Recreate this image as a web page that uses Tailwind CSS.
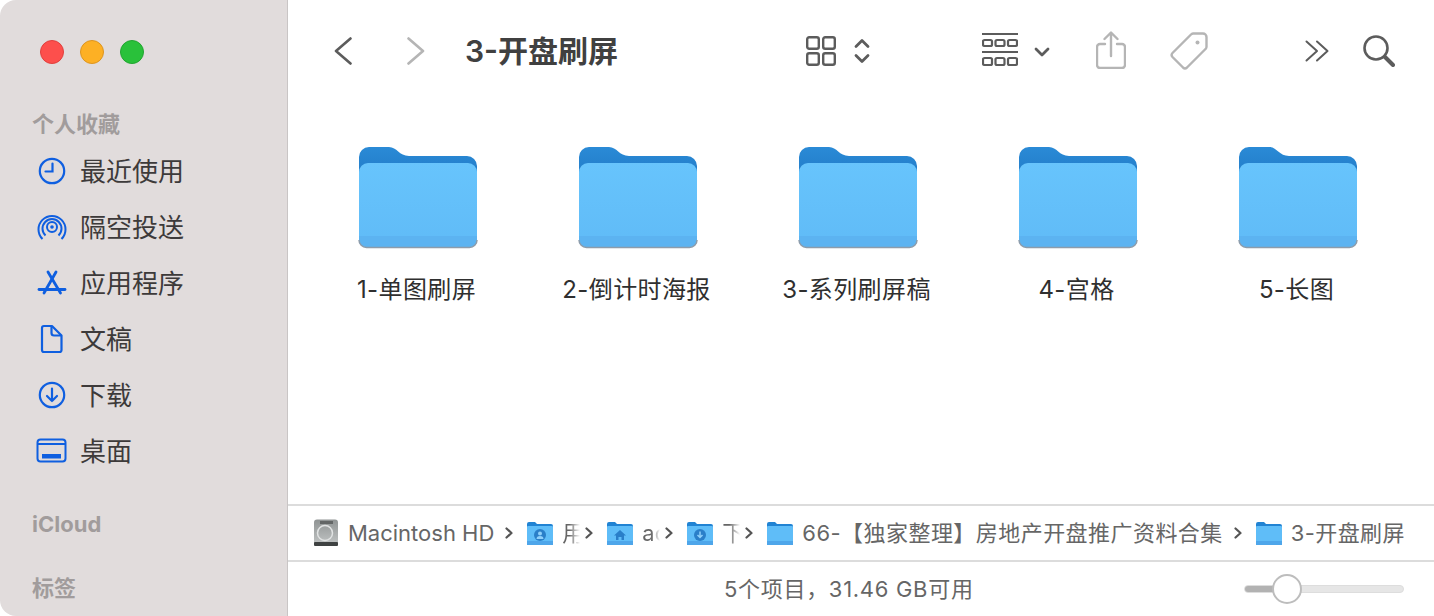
<!DOCTYPE html>
<html lang="zh">
<head>
    <meta charset="UTF-8">
    <title>3-开盘刷屏</title>
    <script src="https://cdn.jsdelivr.net/npm/@tailwindcss/browser@4"></script>
</head>
<body class="bg-white overflow-hidden">
    <!-- Shared icons -->
    <svg class="absolute w-0 h-0">
        <defs>
            <linearGradient id="folderFront" x1="0" y1="0" x2="0" y2="1">
                <stop offset="0" stop-color="#67c4fc"/>
                <stop offset="1" stop-color="#60bbf7"/>
            </linearGradient>
            <linearGradient id="folderBack" x1="0" y1="0" x2="0" y2="1">
                <stop offset="0" stop-color="#2a8ad6"/>
                <stop offset="1" stop-color="#1f78c4"/>
            </linearGradient>
            <linearGradient id="diskBody" x1="0" y1="0" x2="0" y2="1">
                <stop offset="0" stop-color="#8f9393"/>
                <stop offset="1" stop-color="#c3c6c6"/>
            </linearGradient>
        </defs>
        <symbol id="folder" viewBox="0 0 120 102">
            <path d="M1 10 a10 10 0 0 1 10-10 h20 c8 0 10 9 20 9 h58 a10 10 0 0 1 10 10 v20 H1z" fill="url(#folderBack)"/>
            <path d="M1 25 a9 9 0 0 1 9-9 h100 a9 9 0 0 1 9 9 v68 a7 7 0 0 1-7 7 H8 a7 7 0 0 1-7-7z" fill="url(#folderFront)"/>
            <path d="M1 89 h118 v4 a7 7 0 0 1-7 7 H8 a7 7 0 0 1-7-7z" fill="#5cb3f1"/>
            <path d="M1 93 a7.500 7.500 0 0 0 7.500 7.500 h103 a7.500 7.500 0 0 0 7.500-7.500" fill="none" stroke="#8d9cab" stroke-width="1.500"/>
        </symbol>
        <symbol id="mini" viewBox="0 0 26 26">
            <path d="M0 4 a2 2 0 0 1 2-2 h6 l2 2 h14 a2 2 0 0 1 2 2 v6 H0z" fill="#2183d3"/>
            <path d="M0 7 a1 1 0 0 1 1-1 h24 a1 1 0 0 1 1 1 v17 a1 1 0 0 1-1 1 H1 a1 1 0 0 1-1-1z" fill="#5fbdf8"/>
            <rect y="21" width="26" height="4" fill="#4ea6ea"/>
        </symbol>
    </svg>

    <div class="flex h-[616px] w-[1434px] font-['Inter','Noto_Sans_CJK_SC',sans-serif]">
        <!-- Sidebar -->
        <aside class="flex flex-col w-[288px] shrink-0 bg-[#e1dcdc] rounded-l-[16px] border-r border-[#c9c5c5] pl-[32px] text-[#3d3a3a]">
            <div class="flex gap-[16px] pl-[8px] pt-[40px]">
                <span class="size-[24px] rounded-full bg-[#fd4f4c] border border-[#e0403d]"></span>
                <span class="size-[24px] rounded-full bg-[#fdb024] border border-[#dd9520]"></span>
                <span class="size-[24px] rounded-full bg-[#29c13a] border border-[#22a531]"></span>
            </div>
            <div class="mt-[45px] text-[22px] leading-[30px] font-bold text-[#a19c9c]">个人收藏</div>
            <nav class="mt-[4px] pl-[4px] flex flex-col text-[26px]">
                <div class="flex items-center h-[56px]">
                    <svg class="w-[32px] h-[32px] mr-[12px] text-[#0f5fe0]" viewBox="0 0 32 32" fill="none" stroke="currentColor" stroke-width="2.200">
                        <circle cx="16" cy="16" r="12.200"/>
                        <path d="M16.500 8.500 v8 h-7" stroke-linecap="round"/>
                    </svg>
                    <span>最近使用</span>
                </div>
                <div class="flex items-center h-[56px]">
                    <svg class="w-[32px] h-[32px] mr-[12px] text-[#0f5fe0]" viewBox="0 0 32 32" fill="none" stroke="currentColor" stroke-width="2">
                        <path d="M6.500 28 a13.500 13.500 0 1 1 19 0"/>
                        <path d="M9.500 24.500 a9.500 9.500 0 1 1 13 0"/>
                        <circle cx="16" cy="16" r="5"/>
                        <circle cx="16" cy="16" r="1.800" fill="currentColor" stroke="none"/>
                    </svg>
                    <span>隔空投送</span>
                </div>
                <div class="flex items-center h-[56px]">
                    <svg class="w-[32px] h-[32px] mr-[12px] text-[#0f5fe0]" viewBox="0 0 32 32" fill="none" stroke="currentColor" stroke-width="2.800" stroke-linecap="round">
                        <path d="M12 5 L24.500 26"/>
                        <path d="M20 5 L8 26"/>
                        <path d="M3 22.500 H29"/>
                    </svg>
                    <span>应用程序</span>
                </div>
                <div class="flex items-center h-[56px]">
                    <svg class="w-[32px] h-[32px] mr-[12px] text-[#0f5fe0]" viewBox="0 0 32 32" fill="none" stroke="currentColor" stroke-width="2.200" stroke-linejoin="round">
                        <path d="M6 5 a2 2 0 0 1 2-2 h8 l9.500 9.500 v14.500 a2 2 0 0 1-2 2 H8 a2 2 0 0 1-2-2z"/>
                        <path d="M15.500 3 v7 a2.500 2.500 0 0 0 2.500 2.500 h7.500"/>
                    </svg>
                    <span>文稿</span>
                </div>
                <div class="flex items-center h-[56px]">
                    <svg class="w-[32px] h-[32px] mr-[12px] text-[#0f5fe0]" viewBox="0 0 32 32" fill="none" stroke="currentColor" stroke-width="2.200" stroke-linecap="round" stroke-linejoin="round">
                        <circle cx="16" cy="16" r="12.200"/>
                        <path d="M16 9.500 v12.500 M11 17 l5 5 l5-5"/>
                    </svg>
                    <span>下载</span>
                </div>
                <div class="flex items-center h-[56px]">
                    <svg class="w-[32px] h-[32px] mr-[12px] text-[#0f5fe0] overflow-visible" viewBox="0 0 32 32" fill="none" stroke="currentColor" stroke-width="2">
                        <rect x="1.500" y="4.500" width="28" height="22" rx="3"/>
                        <path d="M1.500 9 h28"/>
                        <rect x="6" y="19" width="19" height="4.500" fill="currentColor" stroke="none"/>
                    </svg>
                    <span>桌面</span>
                </div>
            </nav>
            <div class="mt-[30px] text-[22px] leading-[30px] font-bold text-[#a19c9c]">iCloud</div>
            <div class="mt-[34px] text-[22px] leading-[30px] font-bold text-[#a19c9c]">标签</div>
        </aside>

        <!-- Main -->
        <main class="flex flex-col flex-1 min-w-0">
            <header class="flex items-center h-[102px] shrink-0 pl-[46px]">
                <svg class="w-[18px] h-[28px]" viewBox="0 0 18 28" fill="none" stroke="#5c5c5c" stroke-width="2.600" stroke-linecap="round" stroke-linejoin="round"><path d="M16.500 1.500 L2 14 L16.500 26.500"/></svg>
                <svg class="w-[18px] h-[28px] ml-[55px]" viewBox="0 0 18 28" fill="none" stroke="#b5b5b5" stroke-width="2.600" stroke-linecap="round" stroke-linejoin="round"><path d="M1.500 1.500 L16 14 L1.500 26.500"/></svg>
                <h1 class="ml-[40px] w-[341px] text-[30px] font-semibold text-[#404040]">3-开盘刷屏</h1>
                <svg class="w-[30px] h-[30px]" viewBox="0 0 30 30" fill="none" stroke="#5c5c5c" stroke-width="2.400">
                    <rect x="1.200" y="1.200" width="11.600" height="11.600" rx="2"/>
                    <rect x="17.200" y="1.200" width="11.600" height="11.600" rx="2"/>
                    <rect x="1.200" y="17.200" width="11.600" height="11.600" rx="2"/>
                    <rect x="17.200" y="17.200" width="11.600" height="11.600" rx="2"/>
                </svg>
                <svg class="w-[16px] h-[26px] ml-[18px]" viewBox="0 0 16 26" fill="none" stroke="#5c5c5c" stroke-width="2.800" stroke-linecap="round" stroke-linejoin="round"><path d="M2 8.500 L8 2.500 L14 8.500 M2 17.500 L8 23.500 L14 17.500"/></svg>
                <svg class="w-[36px] h-[36px] ml-[112px]" viewBox="0 0 36 36" fill="none" stroke="#5c5c5c" stroke-width="2.200">
                    <path d="M0 1 h36"/>
                    <path d="M0 19 h36"/>
                    <rect x="1" y="7" width="9" height="6" rx="1.500"/><rect x="13.500" y="7" width="9" height="6" rx="1.500"/><rect x="26" y="7" width="9" height="6" rx="1.500"/>
                    <rect x="1" y="25" width="9" height="7" rx="1.500"/><rect x="13.500" y="25" width="9" height="7" rx="1.500"/><rect x="26" y="25" width="9" height="7" rx="1.500"/>
                </svg>
                <svg class="w-[16px] h-[10px] ml-[16px] mt-[2px]" viewBox="0 0 16 10" fill="none" stroke="#5c5c5c" stroke-width="2.800" stroke-linecap="round" stroke-linejoin="round"><path d="M2 2 L8 8 L14 2"/></svg>
                <svg class="w-[30px] h-[38px] ml-[46px] -mt-[3px]" viewBox="0 0 30 38" fill="none" stroke="#b5b5b5" stroke-width="2.400" stroke-linecap="round" stroke-linejoin="round">
                    <path d="M9 13 H4 a3 3 0 0 0-3 3 v18 a3 3 0 0 0 3 3 h22 a3 3 0 0 0 3-3 V16 a3 3 0 0 0-3-3 h-5"/>
                    <path d="M15 25 V2 M8.500 8 L15 1.500 L21.500 8"/>
                </svg>
                <svg class="w-[38px] h-[38px] ml-[44px]" viewBox="0 0 38 38" fill="none" stroke="#b5b5b5" stroke-width="2.400" stroke-linejoin="round">
                    <path d="M21 2.500 a3 3 0 0 1 2-1 h10 a3.500 3.500 0 0 1 3.500 3.500 v10 a3 3 0 0 1-1 2 L17 35.500 a3 3 0 0 1-4 0 L2.500 25 a3 3 0 0 1 0-4z"/>
                    <circle cx="27.500" cy="10.500" r="2" fill="#b5b5b5" stroke="none"/>
                </svg>
                <svg class="w-[24px] h-[22px] ml-[97px]" viewBox="0 0 24 22" fill="none" stroke="#5c5c5c" stroke-width="2" stroke-linecap="round" stroke-linejoin="round"><path d="M1.500 1.500 L12 11 L1.500 20.500 M12 1.500 L22.500 11 L12 20.500"/></svg>
                <svg class="w-[32px] h-[32px] ml-[34px] -mt-[1px]" viewBox="0 0 32 32" fill="none" stroke="#5c5c5c" stroke-linecap="round">
                    <circle cx="13" cy="13" r="11.500" stroke-width="2.600"/>
                    <path d="M22 22 L30 30" stroke-width="4"/>
                </svg>
            </header>

            <!-- Folders -->
            <section class="flex-1 pl-[20px] pt-[45px] text-[24px] text-[#2f2f2f] tracking-[0.4px]">
                <div class="grid grid-cols-[repeat(5,220px)]">
                    <div class="flex flex-col items-center"><svg class="w-[120px] h-[102px]"><use href="#folder"/></svg><span class="mt-[25px] mr-[3px] leading-[32px]">1-单图刷屏</span></div>
                    <div class="flex flex-col items-center"><svg class="w-[120px] h-[102px]"><use href="#folder"/></svg><span class="mt-[25px] mr-[3px] leading-[32px]">2-倒计时海报</span></div>
                    <div class="flex flex-col items-center"><svg class="w-[120px] h-[102px]"><use href="#folder"/></svg><span class="mt-[25px] mr-[3px] leading-[32px]">3-系列刷屏稿</span></div>
                    <div class="flex flex-col items-center"><svg class="w-[120px] h-[102px]"><use href="#folder"/></svg><span class="mt-[25px] mr-[3px] leading-[32px]">4-宫格</span></div>
                    <div class="flex flex-col items-center"><svg class="w-[120px] h-[102px]"><use href="#folder"/></svg><span class="mt-[25px] mr-[3px] leading-[32px]">5-长图</span></div>
                </div>
            </section>

            <!-- Path bar -->
            <div class="flex items-center h-[58px] shrink-0 pl-[25px] border-y-2 border-[#dcdcdc] text-[22px] text-[#666] whitespace-nowrap">
                <svg class="w-[26px] h-[28px] shrink-0" viewBox="0 0 26 28">
                    <rect x="1" y="0.500" width="24" height="26" rx="3" fill="url(#diskBody)"/>
                    <rect x="7" y="2" width="13" height="3" fill="#636666"/>
                    <circle cx="12" cy="14" r="7.500" fill="none" stroke="#e2e4e4" stroke-width="1.500"/>
                    <rect x="1" y="23" width="24" height="4" rx="1" fill="#3f4242"/>
                </svg>
                <span class="ml-[9px]">Macintosh HD</span>
                <svg class="w-[8px] h-[12px] ml-[11px] shrink-0" viewBox="0 0 8 12" fill="none" stroke="#555" stroke-width="2.200" stroke-linecap="round" stroke-linejoin="round"><path d="M1.500 1.500 L6.500 6 L1.500 10.500"/></svg>
                <span class="relative w-[26px] h-[26px] ml-[14px] shrink-0">
                    <svg class="w-[26px] h-[26px]"><use href="#mini"/></svg>
                    <svg class="absolute left-[7px] top-[9px] w-[12px] h-[12px]" viewBox="0 0 12 12"><circle cx="6" cy="6" r="6" fill="#2a7fc9"/><circle cx="6" cy="4.500" r="2" fill="#8fd0fa"/><path d="M2.500 10 a3.500 3 0 0 1 7 0z" fill="#8fd0fa"/></svg>
                </span>
                <span class="ml-[9px] w-[18px] overflow-hidden [mask-image:linear-gradient(to_right,black_40%,transparent)]">用户</span>
                <svg class="w-[8px] h-[12px] ml-[5px] shrink-0" viewBox="0 0 8 12" fill="none" stroke="#555" stroke-width="2.200" stroke-linecap="round" stroke-linejoin="round"><path d="M1.500 1.500 L6.500 6 L1.500 10.500"/></svg>
                <span class="relative w-[26px] h-[26px] ml-[14px] shrink-0">
                    <svg class="w-[26px] h-[26px]"><use href="#mini"/></svg>
                    <svg class="absolute left-[7px] top-[9px] w-[12px] h-[12px]" viewBox="0 0 12 12"><path d="M6 1 L12 6.500 H10 V11 H7.500 V8 H4.500 V11 H2 V6.500 H0z" fill="#2a7fc9"/></svg>
                </span>
                <span class="ml-[9px] w-[18px] overflow-hidden [mask-image:linear-gradient(to_right,black_50%,transparent)]">ac</span>
                <svg class="w-[8px] h-[12px] ml-[5px] shrink-0" viewBox="0 0 8 12" fill="none" stroke="#555" stroke-width="2.200" stroke-linecap="round" stroke-linejoin="round"><path d="M1.500 1.500 L6.500 6 L1.500 10.500"/></svg>
                <span class="relative w-[26px] h-[26px] ml-[14px] shrink-0">
                    <svg class="w-[26px] h-[26px]"><use href="#mini"/></svg>
                    <svg class="absolute left-[7px] top-[9px] w-[12px] h-[12px]" viewBox="0 0 12 12"><circle cx="6" cy="6" r="6" fill="#2a7fc9"/><path d="M6 2.500 V8 M3.500 6 L6 8.500 L8.500 6" fill="none" stroke="#8fd0fa" stroke-width="1.500"/></svg>
                </span>
                <span class="ml-[9px] w-[18px] overflow-hidden [mask-image:linear-gradient(to_right,black_40%,transparent)]">下载</span>
                <svg class="w-[8px] h-[12px] ml-[5px] shrink-0" viewBox="0 0 8 12" fill="none" stroke="#555" stroke-width="2.200" stroke-linecap="round" stroke-linejoin="round"><path d="M1.500 1.500 L6.500 6 L1.500 10.500"/></svg>
                <svg class="w-[26px] h-[26px] ml-[14px] shrink-0"><use href="#mini"/></svg>
                <span class="ml-[9px] tracking-[0.45px]">66-【独家整理】房地产开盘推广资料合集</span>
                <svg class="w-[8px] h-[12px] ml-[11px] shrink-0" viewBox="0 0 8 12" fill="none" stroke="#555" stroke-width="2.200" stroke-linecap="round" stroke-linejoin="round"><path d="M1.500 1.500 L6.500 6 L1.500 10.500"/></svg>
                <svg class="w-[26px] h-[26px] ml-[14px] shrink-0"><use href="#mini"/></svg>
                <span class="ml-[9px] tracking-[0.4px]">3-开盘刷屏</span>
            </div>

            <!-- Status bar -->
            <footer class="flex items-center h-[54px] shrink-0 pl-[436px] text-[22px] tracking-[0.7px] text-[#666] whitespace-nowrap">
                <span>5个项目，31.46 GB可用</span>
                <div class="relative ml-auto mr-[30px] w-[160px] h-[8px] rounded-full bg-[#e6e6e6] border border-[#ddd]">
                    <div class="w-[30px] h-full rounded-l-full bg-[#b2b2b2]"></div>
                    <span class="absolute left-[27px] top-1/2 -translate-y-1/2 size-[30px] rounded-full bg-white border-2 border-[#bdbdbd]"></span>
                </div>
            </footer>
        </main>
    </div>
</body>
</html>
